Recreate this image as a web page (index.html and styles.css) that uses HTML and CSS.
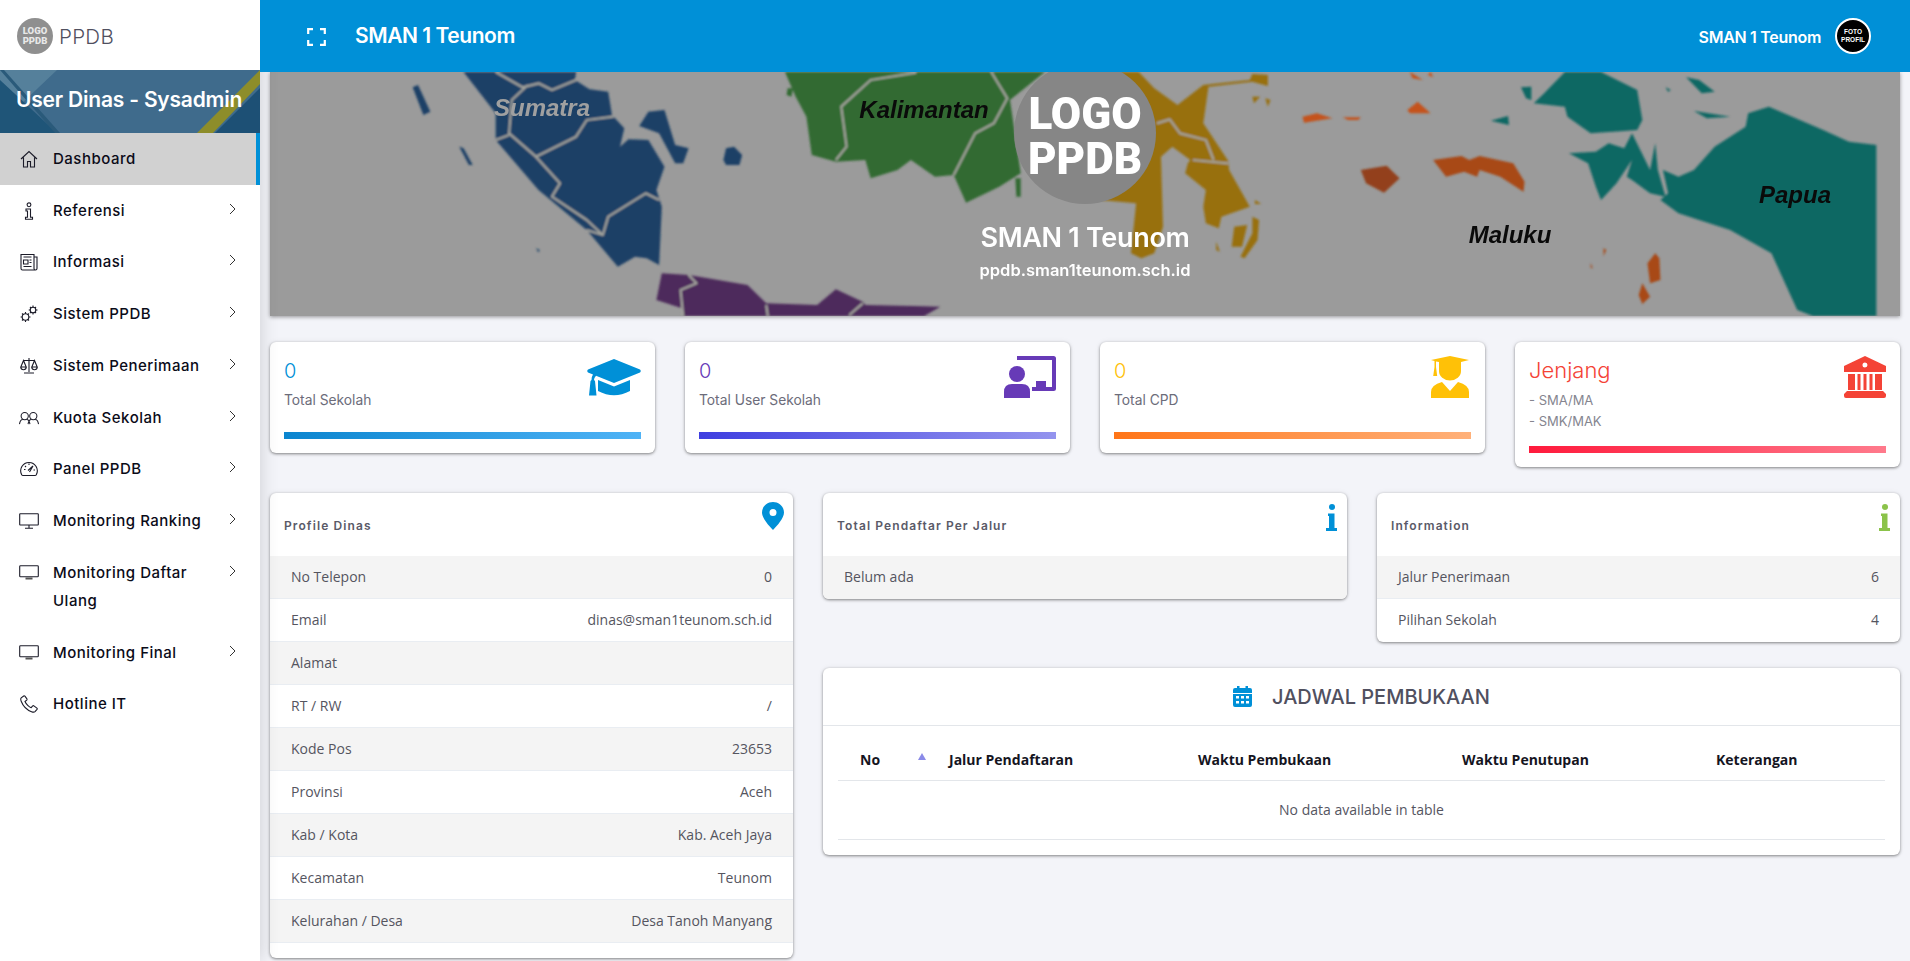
FILE: index.html
```html
<!DOCTYPE html>
<html lang="id">
<head>
<meta charset="utf-8">
<title>PPDB</title>
<link rel="stylesheet" href="styles.css">
</head>
<body>
<div class="app">
  <aside class="sidebar">
    <div class="brand">
      <div class="brand-logo"><span>LOGO</span><span>PPDB</span></div>
      <div class="brand-name">PPDB</div>
    </div>
    <div class="user-banner">
      <svg class="user-bg" viewBox="0 0 260 63" preserveAspectRatio="none" aria-hidden="true">
        <rect width="260" height="63" fill="#3f6b8c"/>
        <polygon points="0,0 57,0 18,37 0,12" fill="#55809b"/>
        <polygon points="0,10 57,63 0,63" fill="#1f5578"/>
        <polygon points="0,0 4,0 60,63 55,63" fill="#2a5a7a"/>
        <polygon points="260,18 260,63 215,63" fill="#1d5075"/>
        <polygon points="260,0 260,14 213,63 197,63" fill="#8d8d2a"/>
      </svg>
      <div class="user-title">User Dinas - Sysadmin</div>
    </div>
    <nav class="nav">
      <a class="nav-item active">
        <svg class="nav-icon" viewBox="0 0 18 18"><path d="M1 9 9 1.500 17 9M3.500 7.500V17h4v-5.500h3V17h4V7.500"/></svg>
        <span class="nav-text">Dashboard</span>
      </a>
      <a class="nav-item">
        <svg class="nav-icon" viewBox="0 0 18 18"><circle cx="9" cy="2.800" r="1.900"/><path d="M6 7h4.500v8.200H12.500V17.300H5.500V15.200H7.500V9H6Z"/></svg>
        <span class="nav-text">Referensi</span>
        <svg class="nav-chev" viewBox="0 0 7 12"><path d="M1 1l5 5-5 5"/></svg>
      </a>
      <a class="nav-item">
        <svg class="nav-icon" viewBox="0 0 18 18"><path d="M14 4h3v11.500a1.500 1.500 0 0 1-3 0V1.500H1v14A1.500 1.500 0 0 0 2.500 17H15.500M3.500 4h8M3.500 7h4.500v4h-4.500ZM9.500 7h2M9.500 9.500h2M3.500 13.500h8"/></svg>
        <span class="nav-text">Informasi</span>
        <svg class="nav-chev" viewBox="0 0 7 12"><path d="M1 1l5 5-5 5"/></svg>
      </a>
      <a class="nav-item">
        <svg class="nav-icon" viewBox="0 0 18 18"><circle cx="5.500" cy="12" r="3.300"/><circle cx="13" cy="5" r="2.800"/><path d="M5.500 7v1.700M5.500 15.300V17M.6 12h1.700M8.800 12h1.700M2 8.500l1.200 1.200M7.800 14.300 9 15.500M2 15.500l1.200-1.200M7.800 9.700 9 8.500M13 .5v1.700M13 7.800v1.700M8.700 5h1.500M15.800 5h1.700M10 2l1 1M15 7l1 1M10 8l1-1M15 3l1-1"/></svg>
        <span class="nav-text">Sistem PPDB</span>
        <svg class="nav-chev" viewBox="0 0 7 12"><path d="M1 1l5 5-5 5"/></svg>
      </a>
      <a class="nav-item">
        <svg class="nav-icon" viewBox="0 0 18 18"><path d="M9 1v14M4 16h10M3 3.500h12M3.500 3.500.8 10h5.400ZM14.500 3.500 11.800 10h5.400ZM.8 10a2.700 2.700 0 0 0 5.400 0M11.800 10a2.700 2.700 0 0 0 5.400 0"/></svg>
        <span class="nav-text">Sistem Penerimaan</span>
        <svg class="nav-chev" viewBox="0 0 7 12"><path d="M1 1l5 5-5 5"/></svg>
      </a>
      <a class="nav-item">
        <svg class="nav-icon nav-icon-wide" viewBox="0 0 21 14"><circle cx="6" cy="5" r="3.800"/><circle cx="15" cy="5" r="3.800"/><path d="M.5 13.500c.5-3.500 2.500-5 3.500-5M11.500 13.500c-.5-3.500-2.500-5-3.500-5M9.500 13.500c.5-3.500 2.500-5 3.500-5M20.500 13.500c-.5-3.500-2.500-5-3.500-5"/></svg>
        <span class="nav-text">Kuota Sekolah</span>
        <svg class="nav-chev" viewBox="0 0 7 12"><path d="M1 1l5 5-5 5"/></svg>
      </a>
      <a class="nav-item">
        <svg class="nav-icon" viewBox="0 0 18 18"><path d="M3 15.500h12a1.500 1.500 0 0 0 1.300-.8A8.300 8.300 0 1 0 1.700 14.700 1.500 1.500 0 0 0 3 15.500ZM8 10.500l5-4.500-3.500 6M4 9.500h1.500M5 6l1 1M9 3.500V5M13.500 10H15"/></svg>
        <span class="nav-text">Panel PPDB</span>
        <svg class="nav-chev" viewBox="0 0 7 12"><path d="M1 1l5 5-5 5"/></svg>
      </a>
      <a class="nav-item">
        <svg class="nav-icon nav-icon-wide" viewBox="0 0 20 16"><rect x=".7" y=".7" width="18.600" height="11.300" rx=".5"/><path d="M10 12v3M6 15.300h8"/></svg>
        <span class="nav-text">Monitoring Ranking</span>
        <svg class="nav-chev" viewBox="0 0 7 12"><path d="M1 1l5 5-5 5"/></svg>
      </a>
      <a class="nav-item">
        <svg class="nav-icon nav-icon-wide" viewBox="0 0 20 16"><rect x=".7" y=".7" width="18.600" height="11" rx=".8"/><path d="M6.500 13.500h7" class="thick"/></svg>
        <span class="nav-text">Monitoring Daftar Ulang</span>
        <svg class="nav-chev" viewBox="0 0 7 12"><path d="M1 1l5 5-5 5"/></svg>
      </a>
      <a class="nav-item">
        <svg class="nav-icon nav-icon-wide" viewBox="0 0 20 16"><rect x=".7" y=".7" width="18.600" height="11" rx=".8"/><path d="M6.500 13.500h7" class="thick"/></svg>
        <span class="nav-text">Monitoring Final</span>
        <svg class="nav-chev" viewBox="0 0 7 12"><path d="M1 1l5 5-5 5"/></svg>
      </a>
      <a class="nav-item">
        <svg class="nav-icon" viewBox="0 0 18 18"><path d="M3.700 1 1.200 2.800C.5 3.500.7 5 1.300 6.500 3 10.800 7 15 11.500 16.700c1.500.6 2.800.6 3.500-.1l2-2.300c.3-.4.300-.9-.1-1.200l-3-2.200c-.4-.3-.9-.2-1.200.1l-1.500 1.700C9.200 12 6 9 5 6.500l1.700-1.400c.3-.3.400-.8.200-1.200L4.900 1.200C4.600.8 4.100.7 3.700 1Z"/></svg>
        <span class="nav-text">Hotline IT</span>
      </a>
    </nav>
  </aside>

  <div class="main">
    <header class="topbar">
      <svg class="fullscreen" viewBox="0 0 19 18"><path d="M1.200 6V1.200H6M13 1.200h4.800V6M1.200 12v4.800H6M13 16.800h4.800V12"/></svg>
      <div class="topbar-title">SMAN 1 Teunom</div>
      <div class="topbar-user">SMAN 1 Teunom</div>
      <div class="avatar"><span>FOTO</span><span>PROFIL</span></div>
    </header>

    <div class="content">
      <section class="hero">
        <svg class="hero-map" viewBox="270 72 1630 244" preserveAspectRatio="none" aria-hidden="true">
          <defs><filter id="soft" x="-5%" y="-5%" width="110%" height="110%"><feGaussianBlur stdDeviation="0.9"/></filter></defs>
          <rect x="270" y="72" width="1630" height="244" fill="#9b9b9b"/>
          <g filter="url(#soft)">
            <g transform="translate(260 0) scale(.5357 .3333)">
              <path class="m-blue" d="M380 216H590L588 240 615 268 650 275 657 345 680 385 672 440 688 418 725 420 755 500 740 570 750 620 745 795 722 775 700 770 668 800 610 690 520 570 440 420 440 340Z"/>
              <path class="m-blue" d="M285 262 295 255 318 335 305 345ZM372 440 380 445 397 495 390 495ZM515 745 522 750 520 757ZM708 378 725 335 755 330 775 435 800 445 790 490 775 490 745 400ZM865 480 870 445 885 440 900 465 895 495 870 495Z"/>
              <path class="m-line" d="M440 216 490 262 520 250 545 270 590 240M500 255 470 300 465 400 515 470 590 410 610 360 660 350M440 420 465 405M515 470 560 550 545 590 610 660 640 705 650 650 720 580 745 600M610 690 640 705"/>
              <path class="m-purple" d="M750 820 800 825 820 830 910 855 945 910 1040 915 1075 868 1125 905 1130 915 1270 920 1240 948H790L788 925 740 900Z"/>
              <path class="m-line" d="M800 825 815 850 785 870 790 948M945 915 948 948M1125 910 1100 945"/>
              <path class="m-green" d="M980 216H1465L1400 300 1420 520 1380 560 1318 608 1295 525 1260 530 1215 480 1190 510 1140 535 1130 480 1075 485 1030 465 1020 350 1000 290ZM985 265 995 265 992 290 983 285Z"/>
              <path class="m-green" d="M1410 535 1420 535 1420 590 1412 590Z"/>
              <path class="m-line" d="M1225 218 1140 240 1085 320 1095 440 1075 480M1365 216 1395 295 1370 370 1335 400 1295 525"/>
            </g>
            <g transform="translate(1100 0) scale(.5165 .3333)">
              <path class="m-gold" d="M75 216 105 265 150 315 200 255 290 240 295 222 325 225 325 258 295 245 210 260 200 370 248 482 250 510 290 620 235 650 230 685 205 670 200 620 205 570 165 520 170 490 175 480 140 440 118 470 122 680 105 760 80 775 60 760 70 610 0 600V216Z"/>
              <path class="m-gold" d="M295 290 310 290 298 310ZM320 295 330 300 325 320ZM300 600 312 612 300 612ZM260 680 285 675 275 740 255 740ZM295 650 308 660 305 720 280 775 272 770 295 700ZM225 725 232 755 225 750Z"/>
              <path class="m-line" d="M110 370 135 358 155 400 205 420 220 480M180 480 248 490"/>
              <path class="m-orange" d="M600 216 625 240 605 235ZM640 216 645 232 635 225ZM392 350 420 340 450 355 395 368ZM470 352 505 352 500 360 480 360ZM595 330 615 305 640 340 600 340Z"/>
              <path class="m-orange-d" d="M505 510 555 497 580 535 550 578 515 550Z"/>
              <path class="m-orange-m" d="M645 480 700 468 715 480 735 468 800 490 822 545 820 575 775 530 735 510 730 530 705 515 670 530ZM1075 760 1083 775 1085 840 1065 850 1060 790ZM1050 850 1065 890 1050 912 1043 885ZM975 745 980 750 975 768ZM950 790 954 805 950 803Z"/>
              <path class="m-teal" d="M860 280 900 216H970L1040 270 1050 360 1040 390 950 400 905 350 900 320 840 310ZM815 262 835 260 835 300 825 295ZM757 362 790 348 792 375ZM1135 232 1160 240 1190 275 1165 280ZM1095 262 1105 270 1100 275ZM1150 333 1220 350 1175 355Z"/>
              <path class="m-teal" d="M908 460 960 455 985 430 1015 445 1030 400 1065 510 1075 430 1080 510 1095 590 1065 580 1030 540 1020 530 1030 480 1000 550 970 600 960 560 945 490Z"/>
              <path class="m-teal" d="M1090 510 1120 530 1150 510 1190 440 1250 380 1255 340 1295 320 1400 390 1450 425 1503 435V948H1380L1350 930 1300 760 1220 690 1120 640 1085 600 1100 580Z"/>
            </g>
          </g>
          <text class="m-label m-light" x="542" y="116">Sumatra</text>
          <text class="m-label" x="924" y="118">Kalimantan</text>
          <text class="m-label" x="1510" y="243">Maluku</text>
          <text class="m-label" x="1795" y="203">Papua</text>
        </svg>
        <div class="hero-logo"><span>LOGO</span><span>PPDB</span></div>
        <div class="hero-name">SMAN 1 Teunom</div>
        <div class="hero-url">ppdb.sman1teunom.sch.id</div>
      </section>

      <section class="stats">
        <div class="card stat">
          <div class="stat-top">
            <div class="stat-body">
              <div class="stat-num c-blue">0</div>
              <div class="stat-label">Total Sekolah</div>
            </div>
            <svg class="stat-icon i-cap" viewBox="0 0 54 37"><path d="M27 0 53 10.500Q54.500 12 53 13.500L27 24 9 16.800Q7 19 7 21L8 22 9.500 36.500H2L3.500 22 4.500 21Q4.500 17.500 6 15.500L1 13.500Q-.5 12 1 10.500Z"/><path d="M11 21 27 27.500 43 21V32Q27 40.500 11 32Z"/></svg>
          </div>
          <div class="bar bar-blue"></div>
        </div>
        <div class="card stat">
          <div class="stat-top">
            <div class="stat-body">
              <div class="stat-num c-purple">0</div>
              <div class="stat-label">Total User Sekolah</div>
            </div>
            <svg class="stat-icon i-teacher" viewBox="0 0 52 42"><path d="M13 0H49.500Q52 0 52 2.500V32.500Q52 35 49.500 35H28V31H32V25H42V31H48V4H13Z"/><path d="M5 18a8 8 0 1 1 16 0 8 8 0 1 1-16 0Z"/><path d="M0 42V36Q0 28 8 28H18Q26 28 26 36V42Z"/></svg>
          </div>
          <div class="bar bar-indigo"></div>
        </div>
        <div class="card stat">
          <div class="stat-top">
            <div class="stat-body">
              <div class="stat-num c-yellow">0</div>
              <div class="stat-label">Total CPD</div>
            </div>
            <svg class="stat-icon i-grad" viewBox="0 0 38 42"><path d="M19 0 38 4 30 6V15A11 9.500 0 0 1 8 15V6L5 5.500V11L6.200 20H2.200L3.500 11V5L0 4Z"/><path d="M0 42V36Q0 29 11 26L19 35 27 26Q38 29 38 36V42Z"/></svg>
          </div>
          <div class="bar bar-orange"></div>
        </div>
        <div class="card stat">
          <div class="stat-top stat-top-list">
            <div class="stat-body">
              <div class="stat-num stat-word c-red">Jenjang</div>
              <div class="stat-label stat-sub">- SMA/MA</div>
              <div class="stat-label stat-sub">- SMK/MAK</div>
            </div>
            <svg class="stat-icon i-bank" viewBox="0 0 42 42"><path fill-rule="evenodd" d="M21 0 42 10V16H0V10ZM21 6.500A2.500 2.500 0 1 0 21 11.500 2.500 2.500 0 0 0 21 6.500Z"/><path d="M4 18H11V34H4ZM13.500 18H16.500V34H13.500ZM19.500 18H22.500V34H19.500ZM25.500 18H28.500V34H25.500ZM31 18H38V34H31ZM3 35H39L42 38V40Q42 42 40 42H2Q0 42 0 40V38Z"/></svg>
          </div>
          <div class="bar bar-red"></div>
        </div>
      </section>

      <section class="panels">
        <div class="card panel panel-profile">
          <div class="panel-head">
            <h2 class="panel-title">Profile Dinas</h2>
            <svg class="i-pin" viewBox="0 0 22 28"><path fill-rule="evenodd" d="M11 0C5 0 0 4.500 0 10.500 0 16 7 24 11 28 15 24 22 16 22 10.500 22 4.500 17 0 11 0ZM11 7A3.500 3.500 0 1 1 11 14 3.500 3.500 0 0 1 11 7Z"/></svg>
          </div>
          <div class="row"><span>No Telepon</span><span>0</span></div>
          <div class="row"><span>Email</span><span>dinas@sman1teunom.sch.id</span></div>
          <div class="row"><span>Alamat</span><span></span></div>
          <div class="row"><span>RT / RW</span><span>/</span></div>
          <div class="row"><span>Kode Pos</span><span>23653</span></div>
          <div class="row"><span>Provinsi</span><span>Aceh</span></div>
          <div class="row"><span>Kab / Kota</span><span>Kab. Aceh Jaya</span></div>
          <div class="row"><span>Kecamatan</span><span>Teunom</span></div>
          <div class="row"><span>Kelurahan / Desa</span><span>Desa Tanoh Manyang</span></div>
          <div class="panel-foot"></div>
        </div>

        <div class="card panel">
          <div class="panel-head">
            <h2 class="panel-title">Total Pendaftar Per Jalur</h2>
            <svg class="i-info c-fill-blue" viewBox="0 0 11 27"><circle cx="6" cy="3" r="3"/><path d="M2 9.500H8.500V24H11V27H0V24H3V12H2Z"/></svg>
          </div>
          <div class="row row-last"><span>Belum ada</span></div>
        </div>

        <div class="card panel">
          <div class="panel-head">
            <h2 class="panel-title">Information</h2>
            <svg class="i-info c-fill-green" viewBox="0 0 11 27"><circle cx="6" cy="3" r="3"/><path d="M2 9.500H8.500V24H11V27H0V24H3V12H2Z"/></svg>
          </div>
          <div class="row"><span>Jalur Penerimaan</span><span>6</span></div>
          <div class="row row-last"><span>Pilihan Sekolah</span><span>4</span></div>
        </div>

        <div class="card schedule">
          <div class="schedule-head">
            <svg class="i-cal" viewBox="0 0 19 21"><path fill-rule="evenodd" d="M4 0H6.500V2H12.500V0H15V2H17Q19 2 19 4V7H0V4Q0 2 2 2H4ZM0 8H19V19Q19 21 17 21H2Q0 21 0 19ZM3 10V12.500H6V10ZM8 10V12.500H11V10ZM13 10V12.500H16V10ZM3 15V17.500H6V15ZM8 15V17.500H11V15ZM13 15V17.500H16V15Z"/></svg>
            <h2 class="schedule-title">JADWAL PEMBUKAAN</h2>
          </div>
          <div class="schedule-body">
            <table class="table">
              <colgroup>
                <col class="col-no"><col class="col-jalur"><col class="col-buka"><col class="col-tutup"><col>
              </colgroup>
              <thead>
                <tr>
                  <th>No<span class="sort"></span></th>
                  <th>Jalur Pendaftaran</th>
                  <th>Waktu Pembukaan</th>
                  <th>Waktu Penutupan</th>
                  <th>Keterangan</th>
                </tr>
              </thead>
              <tbody>
                <tr><td colspan="5">No data available in table</td></tr>
              </tbody>
            </table>
          </div>
        </div>
      </section>
    </div>
  </div>
</div>
</body>
</html>
```

FILE: styles.css
```css
* { box-sizing: border-box; }
html, body { margin: 0; height: 100%; overflow: hidden; }
body { font-family: "Inter", "Liberation Sans", sans-serif; background: #f3f4f9; color: #50505f; }
h2 { margin: 0; }

.app { display: grid; grid-template-columns: 260px 1fr; height: 961px; }

/* Sidebar */
.sidebar { background: #fff; position: relative; z-index: 1; box-shadow: 0 0 18px rgba(0, 0, 0, .16); }
.brand { height: 70px; display: flex; align-items: center; padding: 2px 0 0 17px; gap: 6px; }
.brand-logo { width: 36px; height: 36px; border-radius: 50%; background: #8f8f8f; color: #e8e8e8; font: 900 9.500px/10px "Roboto", sans-serif; display: flex; flex-direction: column; align-items: center; justify-content: center; }
.brand-name { font-size: 20.500px; font-weight: 300; color: #50505f; letter-spacing: .3px; }

.user-banner { height: 63px; position: relative; display: flex; align-items: center; padding: 0 0 4px 16px; }
.user-bg { position: absolute; inset: 0; width: 100%; height: 100%; }
.user-title { position: relative; color: #fff; font-size: 21px; font-weight: 600; white-space: nowrap; letter-spacing: -.2px; }

.nav-item { display: flex; align-items: flex-start; padding: 11.875px 24px 11.875px 20px; color: #0b0b18; font-size: 15px; font-weight: 500; line-height: 28px; letter-spacing: .5px; }
.nav-item.active { background: #d1d1d1; border-right: 4px solid #0090d7; }
.nav-text { flex: 1; margin-left: 15px; padding-right: 20px; }
.nav-icon { width: 18px; height: 18px; flex: none; margin-top: 5px; fill: none; stroke: #1b1b28; stroke-width: 1.100; }
.nav-icon-wide { width: 20px; height: 16px; margin: 6px -1px 0 -1px; }
.nav-icon .thick { stroke-width: 2; stroke: #555; }
.nav-chev { width: 7px; height: 12px; flex: none; margin-top: 6px; fill: none; stroke: #333; stroke-width: 1; }

/* Main */
.main { min-width: 0; }
.topbar { height: 72px; background: #0090d7; color: #fff; display: flex; align-items: center; padding-left: 47px; padding-right: 39px; position: relative; z-index: 2; }
.fullscreen { width: 19px; height: 18px; fill: none; stroke: #fff; stroke-width: 2.200; margin-top: 1px; }
.topbar-title { font-size: 21px; font-weight: 600; margin-left: 29px; flex: 1; letter-spacing: -.45px; margin-bottom: 2px; }
.topbar-user { font-size: 16px; font-weight: 600; letter-spacing: -.3px; margin-top: 1px; }
.avatar { width: 36px; height: 36px; border-radius: 50%; background: #000; border: 2px solid #fff; margin-left: 14px; display: flex; flex-direction: column; align-items: center; justify-content: center; font: 700 6.500px/8px "Liberation Sans", sans-serif; color: #fff; }

.content { padding: 0 10px; }

/* Hero */
.hero { height: 244px; position: relative; overflow: hidden; display: flex; flex-direction: column; align-items: center; color: #fff; box-shadow: 0 1px 4px rgba(0, 0, 0, .4); }
.hero-map { position: absolute; inset: 0; width: 100%; height: 100%; }
.hero-map path { stroke: none; }
.hero-map .m-line { fill: none; stroke: #a3a39c; vector-effect: non-scaling-stroke; stroke-width: 2.200; stroke-linejoin: round; }
.m-blue { fill: #1c3f66; }
.m-purple { fill: #4d2c5c; }
.m-green { fill: #326b33; }
.m-gold { fill: #98700f; }
.m-orange { fill: #c4521d; }
.m-orange-d { fill: #93401a; }
.m-orange-m { fill: #a84818; }
.m-teal { fill: #0f6763; }
.m-label { font: italic 700 24px "Liberation Sans", sans-serif; fill: #0a0a0a; text-anchor: middle; }
.m-light { fill: #a0a0a0; }
.hero-logo { position: relative; width: 142px; height: 142px; flex: none; margin-top: -10px; border-radius: 50%; background: #868686; display: flex; flex-direction: column; align-items: center; justify-content: center; font: 900 44px/45px "Roboto", sans-serif; padding-top: 7px; }
.hero-name { position: relative; font-size: 27px; font-weight: 600; line-height: 34px; margin-top: 17px; letter-spacing: -.3px; }
.hero-url { position: relative; font-size: 16.500px; font-weight: 600; line-height: 20px; margin-top: 5px; }

/* Cards */
.card { background: #fff; border-radius: 6px; box-shadow: 0 1px 3px rgba(0, 0, 0, .45), 0 0 6px rgba(0, 0, 0, .06); }
.stats { display: grid; grid-template-columns: repeat(4, 1fr); gap: 30px; align-items: start; margin: 26px 0; }
.stat { padding: 14px; }
.stat-top { display: flex; justify-content: space-between; padding-bottom: 21px; }
.stat-top-list { padding-bottom: 14px; }
.stat-num { font-size: 20px; line-height: 30px; font-weight: 300; }
.stat-word { font-size: 22px; line-height: 29px; font-weight: 300; }
.stat-label { font-size: 13.800px; line-height: 22px; color: #6c6c7a; margin-top: 3px; font-weight: 400; }
.stat-sub { line-height: 21px; margin-top: 0; font-size: 13px; color: #85858f; }
.stat-num + .stat-sub { margin-top: 5px; }
.stat-icon { flex: none; margin-top: 3px; }
.i-cap { width: 54px; height: 37px; fill: #0090d7; }
.i-teacher { width: 52px; height: 42px; fill: #673ab7; margin-top: 0; }
.i-grad { width: 38px; height: 42px; fill: #ffc107; margin-top: 0; margin-right: 2px; }
.i-bank { width: 42px; height: 42px; fill: #f44336; margin-top: 0; }
.c-blue { color: #0090d7; }
.c-purple { color: #673ab7; }
.c-yellow { color: #ffc107; }
.c-red { color: #f44336; }
.bar { height: 7px; box-shadow: 0 11px 10px -4px rgba(0, 0, 0, .08); }
.bar-blue { background: linear-gradient(90deg, #0b85cf, #4fb3f6); }
.bar-indigo { background: linear-gradient(90deg, #3f3fe0, #9494ee); }
.bar-orange { background: linear-gradient(90deg, #ff7518, #ffb17a); }
.bar-red { background: linear-gradient(90deg, #ff1a3c, #ff7a8c); }

/* Panels */
.panels { display: grid; grid-template-columns: 523px 524px 523px; grid-template-rows: 149px auto; gap: 26px 30px; align-items: start; }
.panel { overflow: hidden; }
.panel-profile { grid-row: 1 / span 2; }
.panel-head { height: 63px; display: flex; justify-content: space-between; align-items: flex-start; padding: 9px 9px 0 14px; }
.panel-title { font-size: 12px; font-weight: 600; letter-spacing: 1.100px; color: #5a5a68; line-height: 47px; }
.i-pin { width: 22px; height: 28px; fill: #0090d7; }
.i-info { width: 11px; height: 27px; margin-top: 2px; margin-right: 1px; }
.c-fill-blue { fill: #0090d7; }
.c-fill-green { fill: #8bc34a; }
.row { height: 43px; display: flex; justify-content: space-between; align-items: center; padding: 0 21px 1px; font: 400 14px "Open Sans", sans-serif; color: #55555f; border-bottom: 1px solid #e9edf2; }
.row:nth-child(even) { background: #f4f4f4; }
.row-last { border-bottom: 0; padding-bottom: 2px; }
.panel-foot { height: 15px; }

/* Schedule */
.schedule { grid-column: 2 / span 2; }
.schedule-head { height: 58px; display: flex; align-items: center; justify-content: center; gap: 20px; border-bottom: 1px solid #e3e6ea; }
.i-cal { width: 19px; height: 21px; fill: #0090d7; }
.schedule-title { font-size: 20px; font-weight: 500; color: #50505f; }
.schedule-body { padding: 15px; }
.table { width: 100%; table-layout: fixed; border-collapse: collapse; font-family: "Open Sans", sans-serif; font-size: 14px; }
.col-no { width: 89px; }
.col-jalur { width: 249px; }
.col-buka { width: 264px; }
.col-tutup { width: 254px; }
.table th { height: 39px; text-align: left; padding: 0 0 2px 22px; font-weight: 700; color: #15151f; border-bottom: 1px solid #e3e6ea; }
.sort { display: inline-block; width: 0; height: 0; margin-left: 38px; vertical-align: 5px; border: 4px solid transparent; border-top: 0; border-bottom: 7px solid #8a8ae8; }
.table td { height: 59px; text-align: center; color: #55555f; border-bottom: 1px solid #e3e6ea; }
```
